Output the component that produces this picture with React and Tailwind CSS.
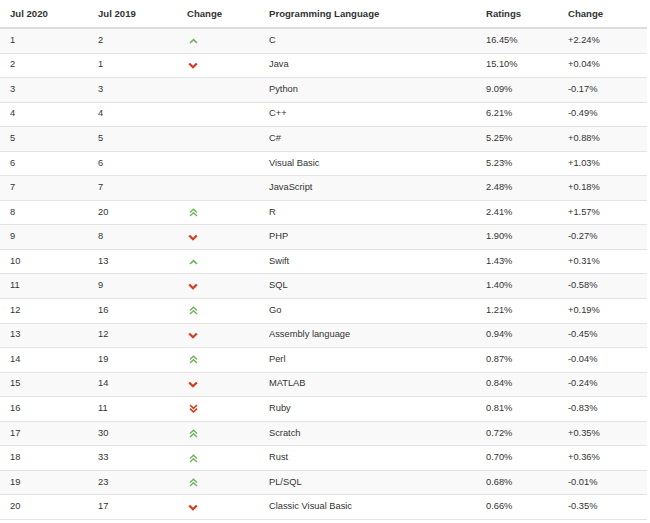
import React from "react";

const rows = [
  [1, 2, "up", "C", "16.45%", "+2.24%"],
  [2, 1, "down", "Java", "15.10%", "+0.04%"],
  [3, 3, "", "Python", "9.09%", "-0.17%"],
  [4, 4, "", "C++", "6.21%", "-0.49%"],
  [5, 5, "", "C#", "5.25%", "+0.88%"],
  [6, 6, "", "Visual Basic", "5.23%", "+1.03%"],
  [7, 7, "", "JavaScript", "2.48%", "+0.18%"],
  [8, 20, "up2", "R", "2.41%", "+1.57%"],
  [9, 8, "down", "PHP", "1.90%", "-0.27%"],
  [10, 13, "up", "Swift", "1.43%", "+0.31%"],
  [11, 9, "down", "SQL", "1.40%", "-0.58%"],
  [12, 16, "up2", "Go", "1.21%", "+0.19%"],
  [13, 12, "down", "Assembly language", "0.94%", "-0.45%"],
  [14, 19, "up2", "Perl", "0.87%", "-0.04%"],
  [15, 14, "down", "MATLAB", "0.84%", "-0.24%"],
  [16, 11, "down2", "Ruby", "0.81%", "-0.83%"],
  [17, 30, "up2", "Scratch", "0.72%", "+0.35%"],
  [18, 33, "up2", "Rust", "0.70%", "+0.36%"],
  [19, 23, "up2", "PL/SQL", "0.68%", "-0.01%"],
  [20, 17, "down", "Classic Visual Basic", "0.66%", "-0.35%"],
];

function Arrow({ kind }) {
  if (kind === "up")
    return (
      <svg width="9" height="6" viewBox="0 0 9 6">
        <polyline points="1,5 4.5,1.6 8,5" fill="none" stroke="#6cb55a" strokeWidth="1.7" />
      </svg>
    );
  if (kind === "down")
    return (
      <svg width="10" height="7" viewBox="0 0 10 7">
        <polyline points="1.2,1.5 5,5.2 8.8,1.5" fill="none" stroke="#d63c1d" strokeWidth="2.3" />
      </svg>
    );
  if (kind === "up2")
    return (
      <svg width="9" height="9" viewBox="0 0 9 9">
        <polyline points="1,4.5 4.5,1.2 8,4.5" fill="none" stroke="#6cb55a" strokeWidth="1.4" />
        <polyline points="1,8 4.5,4.7 8,8" fill="none" stroke="#6cb55a" strokeWidth="1.4" />
      </svg>
    );
  if (kind === "down2")
    return (
      <svg width="9" height="9" viewBox="0 0 9 9">
        <polyline points="1,1 4.5,4.3 8,1" fill="none" stroke="#d63c1d" strokeWidth="1.6" />
        <polyline points="1,4.7 4.5,8 8,4.7" fill="none" stroke="#d63c1d" strokeWidth="1.6" />
      </svg>
    );
  return null;
}

const cols = "grid grid-cols-[88px_89px_82px_217px_82px_1fr] items-center";

export default function App() {
  return (
    <div className="w-[650px] h-[523px] pt-[1px] bg-white font-['Liberation_Sans',Arial,sans-serif] text-[#333] overflow-hidden">
      <div className="w-[647px]">
        <div className={cols + " h-[28px] border-b-2 border-[#dddddd] text-[9.6px] font-bold"}>
          <div className="pl-[10px]">Jul 2020</div>
          <div className="pl-[10px]">Jul 2019</div>
          <div className="pl-[10px]">Change</div>
          <div className="pl-[10px]">Programming Language</div>
          <div className="pl-[10px]">Ratings</div>
          <div className="pl-[10px]">Change</div>
        </div>
        {rows.map((r, i) => (
          <div
            key={r[0]}
            className={
              cols +
              " h-[24.55px] border-b border-[#e3e3e3] text-[9.3px] " +
              (i % 2 === 0 ? "bg-[#f9f9f9]" : "bg-white")
            }
          >
            <div className="pl-[10px]">{r[0]}</div>
            <div className="pl-[10px]">{r[1]}</div>
            <div className="pl-[10px] flex">
              <span className="w-[12px] flex justify-center">
                <Arrow kind={r[2]} />
              </span>
            </div>
            <div className="pl-[10px]">{r[3]}</div>
            <div className="pl-[10px]">{r[4]}</div>
            <div className="pl-[10px]">{r[5]}</div>
          </div>
        ))}
      </div>
    </div>
  );
}
